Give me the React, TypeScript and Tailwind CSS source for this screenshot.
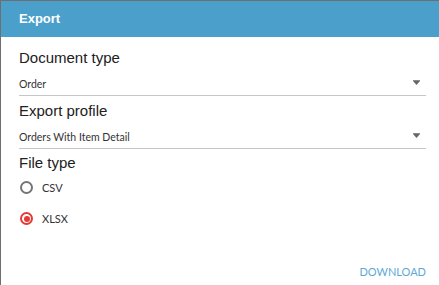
import React, { useState } from "react";

const SelectField: React.FC<{ label: string; value: string; top: string }> = ({ label, value, top }) => {
  return (
    <div className={top}>
      <div className="h-[18px] text-[15px] leading-[18px] text-[#212121] font-['Liberation_Sans',Arial,sans-serif]">
        {label}
      </div>
      <div className="mt-[5px] h-[24px] flex items-center justify-between border-b border-[#c6c6c6]">
        <span className="text-[10.5px] leading-4 text-[#333333] font-['Lato',sans-serif]">{value}</span>
        <svg width="7" height="5" viewBox="0 0 7 5" className="mr-[6px] mb-[2px]">
          <rect x="0" y="0" width="7" height="1" fill="#8a8a8a" />
          <polygon points="0,1 7,1 3.5,5" fill="#666666" />
        </svg>
      </div>
    </div>
  );
};

const App: React.FC = () => {
  const [fileType, setFileType] = useState<"csv" | "xlsx">("xlsx");

  return (
    <div className="w-[439px] h-[285px] bg-white border-l border-t border-[#6f6f6f] flex flex-col overflow-hidden">
      <div className="h-[36px] shrink-0 bg-[#4a9fcb] flex items-center pl-[18px]">
        <span className="text-white text-[13px] font-bold font-['Liberation_Sans',Arial,sans-serif]">Export</span>
      </div>

      <div className="flex-1 flex flex-col pl-[18px] pr-[13px]">
        <SelectField label="Document type" value="Order" top="mt-[12px]" />
        <SelectField label="Export profile" value="Orders With Item Detail" top="mt-[6px]" />

        <div className="mt-[5px] h-[18px] text-[15px] leading-[18px] text-[#212121] font-['Liberation_Sans',Arial,sans-serif]">
          File type
        </div>

        <div className="flex flex-col">
          {[
            { key: "csv" as const, text: "CSV" },
            { key: "xlsx" as const, text: "XLSX" },
          ].map((opt) => {
            const checked = fileType === opt.key;
            return (
              <div
                key={opt.key}
                className="h-[31px] flex items-center cursor-pointer"
                onClick={() => setFileType(opt.key)}
              >
                <div
                  className={`ml-[1px] w-[13px] h-[13px] rounded-full border-2 flex items-center justify-center ${
                    checked ? "border-[#e53935]" : "border-[#757575]"
                  }`}
                >
                  {checked && <div className="w-[6px] h-[6px] rounded-full bg-[#e53935]" />}
                </div>
                <span className="ml-[9px] text-[11px] leading-4 text-[#333333] font-['Lato',sans-serif]">
                  {opt.text}
                </span>
              </div>
            );
          })}
        </div>

        <div className="mt-auto pb-[5px] flex justify-end">
          <button className="text-[11px] leading-4 text-[#5ea9d7] font-['Lato',sans-serif]">
            DOWNLOAD
          </button>
        </div>
      </div>
    </div>
  );
};

export default App;
